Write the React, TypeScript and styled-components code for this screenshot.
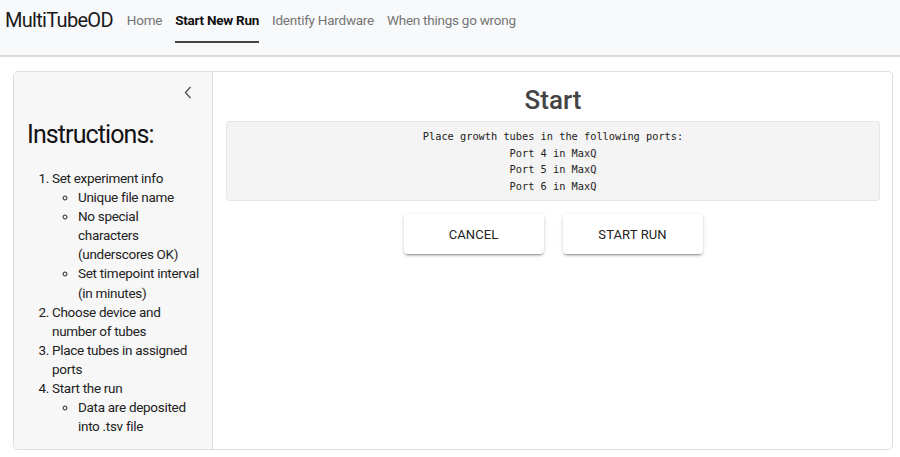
import React from "react";
import styled, { createGlobalStyle } from "styled-components";

const Global = createGlobalStyle`
  html, body { margin: 0; padding: 0; background: #fff; }
  body { font-family: Roboto, "Liberation Sans", sans-serif; color: #212529; }
  * { box-sizing: border-box; }
`;

const Header = styled.header`
  height: 57px;
  background: #f8f9fa;
  border-bottom: 2px solid #dcdcdc;
  display: flex;
  align-items: flex-start;
  padding-left: 5px;
`;

const Brand = styled.div`
  font-size: 20px;
  letter-spacing: -0.7px;
  line-height: 41px;
  color: #1a1a1a;
  margin-right: 14px;
`;

const Nav = styled.nav`
  display: flex;
  gap: 13px;
`;

const NavLink = styled.a<{ $active?: boolean }>`
  font-size: 13.5px;
  letter-spacing: -0.25px;
  line-height: 41px;
  height: 43px;
  color: ${(p) => (p.$active ? "#111" : "#757575")};
  font-weight: ${(p) => (p.$active ? 700 : 400)};
  border-bottom: 2px solid ${(p) => (p.$active ? "#444" : "transparent")};
  text-decoration: none;
  cursor: pointer;
`;

const Card = styled.div`
  margin: 14px 0 0 13px;
  width: 880px;
  height: 379px;
  border: 1px solid #dedede;
  border-radius: 5px;
  display: flex;
  overflow: hidden;
`;

const Sidebar = styled.aside`
  width: 199px;
  flex: none;
  background: #f7f7f7;
  border-right: 1px solid #dedede;
  padding: 12px 11px 0 13px;
  display: flex;
  flex-direction: column;
`;

const Collapse = styled.button`
  align-self: flex-end;
  margin-right: 7px;
  background: none;
  border: none;
  padding: 0;
  width: 12px;
  height: 16px;
  display: flex;
  align-items: center;
  justify-content: center;
  cursor: pointer;
`;

const SideTitle = styled.h2`
  margin: 19px 0 0 0;
  font-size: 25px;
  letter-spacing: -0.9px;
  font-weight: 400;
  color: #111;
  line-height: 32px;
`;

const OList = styled.ol`
  margin: 18px 0 0 0;
  padding-left: 25px;
  font-size: 13.5px;
  letter-spacing: -0.3px;
  line-height: 19.1px;
  color: #222;
`;

const UList = styled.ul`
  list-style: circle;
  margin: 0;
  padding-left: 26px;
`;

const Main = styled.main`
  flex: 1;
  padding: 0 12px 0 13px;
  display: flex;
  flex-direction: column;
  align-items: stretch;
`;

const Title = styled.h1`
  margin: 12px 0 0 0;
  text-align: center;
  font-size: 26px;
  font-weight: 500;
  color: #444;
  line-height: 32px;
`;

const PortBox = styled.pre`
  margin: 5px 0 0 0;
  background: #f4f4f4;
  border: 1px solid #e6e6e6;
  border-radius: 3px;
  height: 80px;
  padding: 6px 0 0 0;
  text-align: center;
  font-family: "DejaVu Sans Mono", "Liberation Mono", monospace;
  font-size: 10.3px;
  line-height: 16.6px;
  color: #222;
`;

const Buttons = styled.div`
  display: flex;
  justify-content: center;
  gap: 19px;
  margin-top: 13px;
`;

const Button = styled.button`
  width: 140px;
  height: 40px;
  background: #fff;
  border: none;
  border-radius: 4px;
  box-shadow: 0 3px 1px -2px rgba(0,0,0,0.2), 0 2px 2px 0 rgba(0,0,0,0.14), 0 1px 5px 0 rgba(0,0,0,0.12);
  font-family: Roboto, "Liberation Sans", sans-serif;
  font-size: 13px;
  color: #222;
  text-transform: uppercase;
  letter-spacing: 0.1px;
  cursor: pointer;
`;

export default function App() {
  return (
    <>
      <Global />
      <Header>
        <Brand>MultiTubeOD</Brand>
        <Nav>
          <NavLink>Home</NavLink>
          <NavLink $active>Start New Run</NavLink>
          <NavLink>Identify Hardware</NavLink>
          <NavLink>When things go wrong</NavLink>
        </Nav>
      </Header>
      <Card>
        <Sidebar>
          <Collapse aria-label="collapse">
            <svg width="8" height="13" viewBox="0 0 8 13">
              <path d="M6.5 1 L1.5 6.5 L6.5 12" fill="none" stroke="#555" strokeWidth="1.4" />
            </svg>
          </Collapse>
          <SideTitle>Instructions:</SideTitle>
          <OList>
            <li>
              Set experiment info
              <UList>
                <li>Unique file name</li>
                <li>No special characters (underscores OK)</li>
                <li>Set timepoint interval (in minutes)</li>
              </UList>
            </li>
            <li>Choose device and number of tubes</li>
            <li>Place tubes in assigned ports</li>
            <li>
              Start the run
              <UList>
                <li>Data are deposited into .tsv file</li>
              </UList>
            </li>
          </OList>
        </Sidebar>
        <Main>
          <Title>Start</Title>
          <PortBox>{`Place growth tubes in the following ports:
Port 4 in MaxQ
Port 5 in MaxQ
Port 6 in MaxQ`}</PortBox>
          <Buttons>
            <Button>Cancel</Button>
            <Button>Start Run</Button>
          </Buttons>
        </Main>
      </Card>
    </>
  );
}
